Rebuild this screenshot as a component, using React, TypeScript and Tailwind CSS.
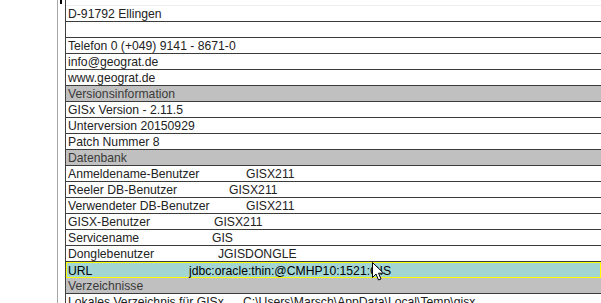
import React from 'react'

type Row = { label: string; value?: string; w?: number; kind?: 'head' | 'sel' }

const rows: Row[] = [
  { label: 'D-91792 Ellingen' },
  { label: '' },
  { label: 'Telefon 0 (+049) 9141 - 8671-0' },
  { label: 'info@geograt.de' },
  { label: 'www.geograt.de' },
  { label: 'Versionsinformation', kind: 'head' },
  { label: 'GISx Version - 2.11.5' },
  { label: 'Unterversion 20150929' },
  { label: 'Patch Nummer 8' },
  { label: 'Datenbank', kind: 'head' },
  { label: 'Anmeldename-Benutzer', value: 'GISX211', w: 178 },
  { label: 'Reeler DB-Benutzer', value: 'GISX211', w: 161 },
  { label: 'Verwendeter DB-Benutzer', value: 'GISX211', w: 178 },
  { label: 'GISX-Benutzer', value: 'GISX211', w: 146 },
  { label: 'Servicename', value: 'GIS', w: 144 },
  { label: 'Donglebenutzer', value: 'JGISDONGLE', w: 150 },
  { label: 'URL', value: 'jdbc:oracle:thin:@CMHP10:1521:GIS', w: 121, kind: 'sel' },
  { label: 'Verzeichnisse', kind: 'head' },
  { label: 'Lokales Verzeichnis für GISx', value: 'C:\\Users\\Marsch\\AppData\\Local\\Temp\\gisx', w: 175 },
]

const InfoRow = ({ row }: { row: Row }) => {
  if (row.kind === 'sel') {
    return (
      <div className="h-[16px] shrink-0 flex items-center bg-[#a3d5d3] border border-[#ffff00] pl-px pt-px text-black leading-[14px] whitespace-nowrap">
        <span className="shrink-0" style={{ width: row.w }}>{row.label}</span>
        <span>{row.value}</span>
      </div>
    )
  }
  const bg = row.kind === 'head' ? 'bg-[#c0c0c0] text-[#3a3a3a]' : 'bg-white text-[#222222]'
  return (
    <div className={`h-[16px] shrink-0 flex items-center border-b border-[#3c3c3c] pl-[2px] pt-px leading-[15px] whitespace-nowrap ${bg}`}>
      <span className="shrink-0" style={row.w ? { width: row.w } : undefined}>{row.label}</span>
      {row.value && <span>{row.value}</span>}
    </div>
  )
}

const App = () => {
  return (
    <div className="relative h-[303px] w-[601px] overflow-hidden bg-white flex font-['Liberation_Sans',Arial,sans-serif] text-[12.2px]">
      <div className="w-[57px] shrink-0" />
      <div className="w-px shrink-0 bg-[#a8a8a8]" />
      <div className="w-[7px] shrink-0" />
      <div className="w-px shrink-0 bg-[#404040]" />
      <div className="flex-1 flex flex-col">
        <div className="h-[5px] shrink-0" />
        <div className="h-px shrink-0 bg-[#eeeeee]" />
        {rows.map((r, i) => (
          <InfoRow key={i} row={r} />
        ))}
      </div>
      <div className="absolute left-[60px] top-0 w-[2px] h-[4px] bg-black" />
      <svg className="absolute left-[372px] top-[262px]" width="13" height="19" viewBox="0 0 13 19">
        <path d="M0.5 0.5 L0.5 15.5 L4 12 L6.5 18 L9 17 L6.5 11.2 L11.5 11.2 Z" fill="white" stroke="black" strokeWidth="1" />
      </svg>
    </div>
  )
}

export default App
